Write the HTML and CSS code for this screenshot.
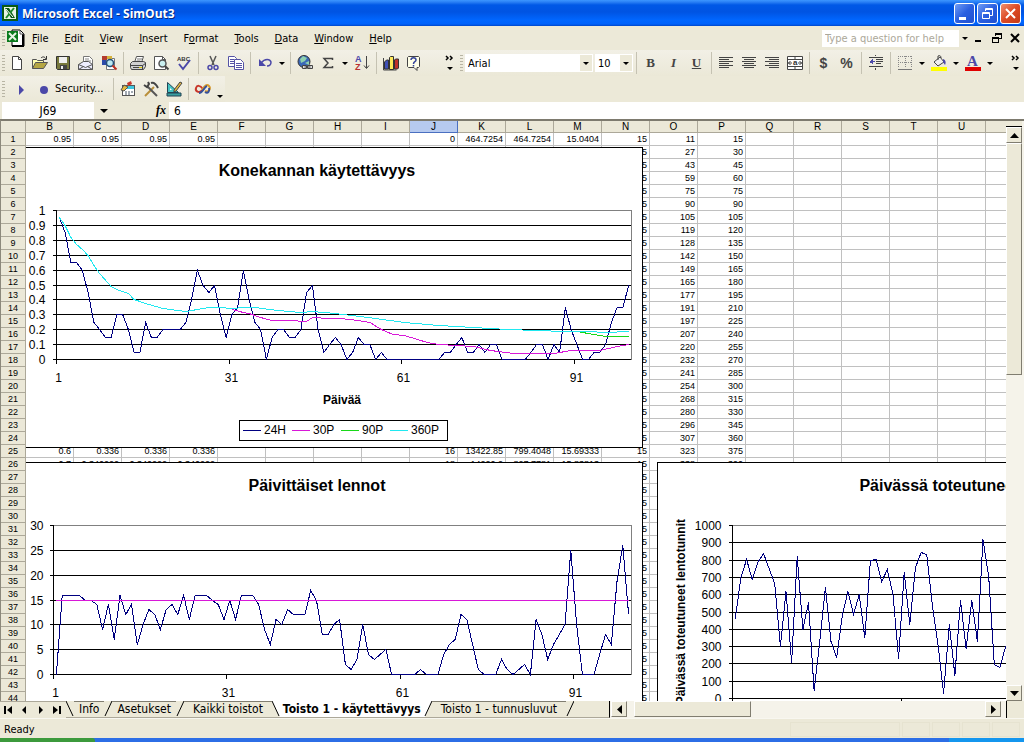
FILE: index.html
```html
<!DOCTYPE html>
<html lang="en">
<head>
    <meta charset="UTF-8">
    <title>Microsoft Excel - SimOut3</title>
    <link rel="stylesheet" href="styles.css">
</head>
<body>
    <header class="titlebar">
        <svg class="app-icon" width="16" height="16" viewBox="0 0 16 16">
            <rect width="16" height="16" fill="#0a5a14"/>
            <rect x="2" y="2" width="12" height="12" fill="#e8f4e4"/>
            <path d="M3 3h4l6 10H9z" fill="#0a5a14"/>
            <path d="M12 3L4 13" stroke="#1f8a2c" stroke-width="2"/>
            <path d="M4 4l7 8" stroke="#fff"/>
        </svg>
        <h1>Microsoft Excel - SimOut3</h1>
        <div class="window-buttons">
            <button class="win" aria-label="Minimize"><svg width="19" height="19"><path d="M4 13h7v3H4z" fill="#fff"/></svg></button>
            <button class="win" aria-label="Restore"><svg width="19" height="19" fill="none" stroke="#fff"><path d="M7.500 7V4.500h7v7H12M7 5.500h8"/><path d="M4.500 8.500h7v6h-7zM4 9.500h8"/></svg></button>
            <button class="win win-close" aria-label="Close"><svg width="19" height="19"><path d="M5 5l9 9M14 5l-9 9" stroke="#fff" stroke-width="2"/></svg></button>
        </div>
    </header>

    <nav class="menubar">
        <span class="grip"></span>
        <svg class="doc-icon" width="18" height="18" viewBox="0 0 18 18">
            <path d="M5 1h8l4 4v12H5z" fill="#fff" stroke="#000"/>
            <path d="M16 5v12H5" fill="none" stroke="#000" stroke-width="2"/>
            <path d="M13 1v4h4" fill="none" stroke="#555"/>
            <rect x="0" y="2" width="11" height="11" fill="#0a7a1c"/>
            <path d="M2 4l7 7M9 4l-7 7" stroke="#e8f4e4" stroke-width="2"/>
        </svg>
        <button><u>F</u>ile</button>
        <button><u>E</u>dit</button>
        <button><u>V</u>iew</button>
        <button><u>I</u>nsert</button>
        <button>F<u>o</u>rmat</button>
        <button><u>T</u>ools</button>
        <button><u>D</u>ata</button>
        <button><u>W</u>indow</button>
        <button><u>H</u>elp</button>
        <div class="help-box">
            <input type="text" placeholder="Type a question for help" aria-label="Type a question for help">
            <button class="arrow" aria-label="Previous questions"></button>
        </div>
        <div class="doc-buttons">
            <button aria-label="Minimize workbook"><svg width="10" height="10"><path d="M1 7h6v2H1z"/></svg></button>
            <button aria-label="Restore workbook"><svg width="10" height="10" fill="none" stroke="#000" shape-rendering="crispEdges"><path d="M3.500 3V.500h6v5H7M3 1.500h7M.500 4.500h6v5h-6zM0 5.500h7"/></svg></button>
            <button aria-label="Close workbook"><svg width="10" height="10"><path d="M1 1l8 8M9 1L1 9" stroke="#000" stroke-width="2"/></svg></button>
        </div>
    </nav>

    <div class="toolbars">
        <div class="toolbar standard">
            <span class="grip"></span>
            <button aria-label="New"><svg width="16" height="16"><path d="M3.500 1.500h6l3 3v10h-9z" fill="#fff" stroke="#444"/><path d="M9.500 1.500v3h3" fill="none" stroke="#444"/></svg></button>
            <button aria-label="Open"><svg width="16" height="16"><path d="M.500 13.500v-9h4l1 1h6v3" fill="#ffffb0" stroke="#555"/><path d="M.500 13.500l3-6h12l-4 6z" fill="#b5a642" stroke="#555"/><path d="M9 3c2-2 4-1 5 1M14.500 1v3.500H11" fill="none" stroke="#333"/></svg></button>
            <button aria-label="Save"><svg width="16" height="16"><path d="M1.500 1.500h13v13h-12l-1-1z" fill="#77783c" stroke="#333"/><rect x="4" y="2" width="8" height="6" fill="#eee"/><rect x="5" y="10" width="7" height="4" fill="#444"/><rect x="6" y="11" width="2" height="3" fill="#eee"/></svg></button>
            <button aria-label="E-mail"><svg width="16" height="16"><path d="M5.500 8V1.500h6l3 3V12" fill="#fff" stroke="#777"/><path d="M7 4h4M7 6h6" stroke="#888"/><path d="M.500 9.500l5-3h5l4 3v5H.500z" fill="#eef" stroke="#555"/><path d="M.500 9.500l7 3 7-3M.500 14.500l5-3M14.500 14.500l-5-3" fill="none" stroke="#555"/></svg></button>
            <button aria-label="Search"><svg width="16" height="16"><path d="M5.500 3.500h8v11h-8z" fill="#fff" stroke="#777"/><path d="M1 1h5v4H1z" fill="#b33b2f"/><path d="M6 1h5v3H6z" fill="#d7b23b"/><path d="M1 5h4v5H1z" fill="#2c4aa8"/><circle cx="9" cy="8" r="3.500" fill="#bdeaf2" stroke="#24507a" stroke-width="1.500"/><path d="M11.500 10.500l4 4" stroke="#c03020" stroke-width="2"/></svg></button>
            <span class="sep"></span>
            <button aria-label="Print"><svg width="16" height="16"><path d="M4.500 7.500l2-6h7l-2 6" fill="#fff" stroke="#555"/><path d="M7 4h5M6.500 6h4" stroke="#777"/><path d="M.500 8.500l2-2h11l2 1v4l-2 3h-12l-1-2z" fill="#cfcfcf" stroke="#444"/><path d="M.500 10.500h12l3-2M12.500 10.500v4M3 12.500h7" fill="none" stroke="#444"/><path d="M9 12h3v1H9z" fill="#d8c800"/></svg></button>
            <button aria-label="Print Preview"><svg width="16" height="16"><path d="M1.500 1.500h8l3 3v10h-11z" fill="#fff" stroke="#555"/><path d="M9.500 1.500v3h3" fill="none" stroke="#555"/><circle cx="9.500" cy="8.500" r="3.500" fill="#c9efef" stroke="#555" stroke-width="1.500"/><path d="M12 11l3.500 3.500" stroke="#444" stroke-width="2"/></svg></button>
            <button aria-label="Spelling"><svg width="16" height="16"><text x="1" y="6" class="abc">ABC</text><path d="M3 9l4 5 7-9" fill="none" stroke="#4b48a8" stroke-width="2"/></svg></button>
            <span class="sep"></span>
            <button aria-label="Cut"><svg width="16" height="16" fill="none"><path d="M5 1l4 9M11 1L7 10" stroke="#555" stroke-width="1.500"/><circle cx="5" cy="12.500" r="2" stroke="#4b48a8" stroke-width="1.500"/><circle cx="11" cy="12.500" r="2" stroke="#4b48a8" stroke-width="1.500"/></svg></button>
            <button aria-label="Copy"><svg width="16" height="16" fill="#fff" stroke="#5553a5"><path d="M.500 1.500h6l2 2v8h-8z"/><path d="M2 4.500h4M2 6.500h4M2 8.500h4"/><path d="M6.500 4.500h6l3 3v7h-9z"/><path d="M8 8.500h6M8 10.500h6M8 12.500h6"/></svg></button>
            <span class="sep"></span>
            <button aria-label="Undo"><svg width="16" height="16"><path d="M4 8c4-5 9-4 10-1 0 3-2 4-4 4" fill="none" stroke="#4b48a8" stroke-width="1.500"/><path d="M2 4v7h7z" fill="#4b48a8"/></svg></button>
            <button class="arrow" aria-label="Undo list"></button>
            <span class="sep"></span>
            <button aria-label="Hyperlink"><svg width="16" height="16"><circle cx="7" cy="6.500" r="6" fill="#3a68b8" stroke="#333"/><path d="M3 4l3-3 4 2-2 3-4 2zM8 8l4-2v4z" fill="#8ed0b0"/><path d="M5.500 10.500h4v3h-4zM10.500 10.500h5v3h-5zM7.500 12h6" fill="#ddd" stroke="#444"/></svg></button>
            <button aria-label="AutoSum"><svg width="16" height="16"><path d="M12.500 5V3.500H4L8 8l-4 4.500h8.500V11" fill="none" stroke="#444" stroke-width="1.500"/></svg></button>
            <button class="arrow" aria-label="AutoSum list"></button>
            <button aria-label="Sort Ascending"><svg width="16" height="16"><text x="1" y="7" class="sort-a">A</text><text x="1" y="15" class="sort-z">Z</text><path d="M12.500 1v12M10 10.500l2.500 3 2.500-3" fill="none" stroke="#444"/></svg></button>
            <span class="sep"></span>
            <button aria-label="Chart Wizard"><svg width="16" height="16"><path d="M.500 3v12h13" fill="none" stroke="#444"/><path d="M1.500 7l2-2h2v9h-4z" fill="#3f50b8" stroke="#333"/><path d="M6.500 2.500l1-1h3v13h-4z" fill="#ffe95a" stroke="#333"/><path d="M11.500 5l1-1h3v9l-1 1h-3z" fill="#c0302a" stroke="#333"/></svg></button>
            <button aria-label="Help"><svg width="16" height="16"><path d="M2.500 1.500h10l1 1v9l-1 1H11v3l-3-3H2.500l-1-1v-9z" fill="#ffffe8" stroke="#444"/><path d="M5 5c0-3 5-3 5 0 0 2-2.500 1.500-2.500 4M7.500 10v1.500" fill="none" stroke="#36459a" stroke-width="1.500"/></svg></button>
            <button class="overflow" aria-label="Toolbar options"><svg width="10" height="18"><path d="M1 2l2 2-2 2M5 2l2 2-2 2" fill="none" stroke="#000" stroke-width="1.500"/><path d="M2 13h6l-3 3z"/></svg></button>
        </div>
        <div class="toolbar formatting">
            <span class="grip"></span>
            <div class="combo combo-font">
                <select aria-label="Font"><option>Arial</option></select>
            </div>
            <div class="combo combo-size">
                <select aria-label="Font size"><option>10</option></select>
            </div>
            <span class="sep"></span>
            <button class="letter"><b>B</b></button>
            <button class="letter"><i>I</i></button>
            <button class="letter"><u>U</u></button>
            <span class="sep"></span>
            <button aria-label="Align Left"><svg width="16" height="16" stroke="#444" shape-rendering="crispEdges"><path d="M1 2.500h14M1 4.500h10M1 6.500h14M1 8.500h10M1 10.500h14M1 12.500h10"/></svg></button>
            <button aria-label="Center"><svg width="16" height="16" stroke="#444" shape-rendering="crispEdges"><path d="M1 2.500h14M3 4.500h10M1 6.500h14M3 8.500h10M1 10.500h14M3 12.500h10"/></svg></button>
            <button aria-label="Align Right"><svg width="16" height="16" stroke="#444" shape-rendering="crispEdges"><path d="M1 2.500h14M5 4.500h10M1 6.500h14M5 8.500h10M1 10.500h14M5 12.500h10"/></svg></button>
            <button aria-label="Merge and Center"><svg width="16" height="16"><path d="M.500 1.500h15v13H.500zM.500 4.500h15M.500 11.500h15M8 1v3M8 12v3" fill="#fff" stroke="#444"/><path d="M1 8h4M11 8h4M3.500 6L1.500 8l2 2M12.500 6l2 2-2 2" stroke="#444" fill="none"/><text x="6" y="10" class="merge-a">a</text></svg></button>
            <span class="sep"></span>
            <button class="letter money"><b>$</b></button>
            <button class="letter percent"><b>%</b></button>
            <span class="sep"></span>
            <button aria-label="Decrease Indent"><svg width="16" height="16" shape-rendering="crispEdges"><path d="M1 2.500h14M8 4.500h7M8 6.500h7M8 8.500h5M1 11.500h14M7.500 0v1M7.500 13v2" stroke="#444"/><path d="M5 4v5L1 7zM5 6h2v1H5z" fill="#4b48a8"/></svg></button>
            <span class="sep"></span>
            <button aria-label="Borders"><svg width="16" height="16" shape-rendering="crispEdges"><path d="M1 1.500h14M1 7.500h14M1.500 1v12M8.500 1v12M14.500 1v12" stroke="#888" stroke-dasharray="1 1"/><path d="M1 14.500h14" stroke="#777"/></svg></button>
            <button class="arrow" aria-label="Border list"></button>
            <button aria-label="Fill Color"><svg width="16" height="16"><path d="M3 7l6-5 4 5-6 4z" fill="#eee" stroke="#444"/><path d="M7 5V1c2-1 3 0 3 2" fill="none" stroke="#444"/><path d="M12 4c3 1 3 4 2 6l-2-3z" fill="#4b48a8"/><rect y="12" width="16" height="4" fill="#ff0"/></svg></button>
            <button class="arrow" aria-label="Fill color list"></button>
            <button aria-label="Font Color"><svg width="16" height="16"><text x="2" y="11" class="font-a">A</text><rect y="12" width="16" height="4" fill="#e00000"/></svg></button>
            <button class="arrow" aria-label="Font color list"></button>
            <button class="overflow" aria-label="Toolbar options"><svg width="10" height="18"><path d="M1 2l2 2-2 2M5 2l2 2-2 2" fill="none" stroke="#000" stroke-width="1.500"/><path d="M2 13h6l-3 3z"/></svg></button>
        </div>
    </div>

    <div class="toolbars">
        <div class="toolbar macros">
            <span class="grip"></span>
            <button aria-label="Run Macro"><svg width="16" height="16"><path d="M6 4l5 5-5 5z" fill="#4b48a8"/></svg></button>
            <button aria-label="Record Macro"><svg width="16" height="16"><circle cx="8" cy="9" r="4" fill="#4b48a8"/></svg></button>
            <button class="security">Security...</button>
            <span class="sep"></span>
            <button aria-label="Visual Basic Editor"><svg width="16" height="16"><rect x="2.500" y="4.500" width="12" height="10" fill="#fff" stroke="#555"/><rect x="3" y="5" width="11" height="3" fill="#3ec6e0"/><path d="M5 11h2M8 11h2M11 11h2M5 13h2M8 13h2" stroke="#456"/><path d="M1 9l3-5 4 2-4 4z" fill="#e5b83c" stroke="#555"/><path d="M7 2l4-2 1 3-4 2z" fill="#c8382c"/></svg></button>
            <button aria-label="Toolbox"><svg width="16" height="16" fill="none"><path d="M2 15L11 6" stroke="#b98f3a" stroke-width="2"/><path d="M4 5l10 10" stroke="#555" stroke-width="2"/><path d="M8 2c3-1 5 1 7 5M1 4l3 2 2-3-1-2" stroke="#444" stroke-width="2"/></svg></button>
            <button aria-label="Design Mode"><svg width="16" height="16"><path d="M1.500 1.500v10h11z" fill="#45c4c4" stroke="#245"/><path d="M4 7v2h2z" fill="#fff"/><path d="M1 12h14v3H1z" fill="#3a9ea0" stroke="#245"/><path d="M8 9l6-8 2 1-6 8-2 1z" fill="#e4b840" stroke="#444"/></svg></button>
            <span class="sep"></span>
            <button aria-label="Script Editor"><svg width="18" height="16" fill="none" stroke-width="2"><path d="M9 8C6 4 3 4 2 7s3 6 6 2" stroke="#c8382c"/><path d="M8 9c3-5 5-6 7-4s0 7-4 5" stroke="#d89a2a"/><path d="M5 12c4 0 5-6 8-7M11 11c3 2 5-1 4-4" stroke="#35509c"/></svg></button>
            <button class="arrow arrow-low" aria-label="Toolbar options"></button>
        </div>
    </div>

    <div class="formula-bar">
        <input class="name-box" type="text" value="J69" aria-label="Name box">
        <button class="arrow" aria-label="Name list"></button>
        <button class="fx">fx</button>
        <input class="formula" type="text" value="6" aria-label="Formula">
    </div>

    <main class="workbook">
        <div class="sheet">
            <table>
                <thead><tr id="columns"><th class="corner"></th></tr></thead>
                <tbody id="rows"></tbody>
            </table>
            <svg class="chart chart-availability" id="availability" width="617" height="301"></svg>
            <svg class="chart chart-flights" id="flights" width="617" height="301"></svg>
            <svg class="chart chart-hours" id="hours" width="660" height="301"></svg>
        </div>
        <div class="vscroll">
            <span class="split-y"></span>
            <button class="scroll-btn" aria-label="Scroll up"><svg width="9" height="5"><path d="M0 5h9L4.500 0z"/></svg></button>
            <span class="thumb-y"></span>
            <button class="scroll-btn" aria-label="Scroll down"><svg width="9" height="5"><path d="M0 0h9L4.500 5z"/></svg></button>
        </div>
    </main>

    <div class="sheet-bar">
        <div class="tab-nav">
            <button aria-label="First sheet"><svg width="9" height="8"><path d="M0 0h2v8H0zM8 0v8L3 4z"/></svg></button>
            <button aria-label="Previous sheet"><svg width="9" height="8"><path d="M6 0v8L2 4z"/></svg></button>
            <button aria-label="Next sheet"><svg width="9" height="8"><path d="M2 0v8l4-4z"/></svg></button>
            <button aria-label="Last sheet"><svg width="9" height="8"><path d="M0 0v8l5-4zM6 0h2v8H6z"/></svg></button>
        </div>
        <div class="tabs">
            <svg class="edge" width="8" height="16"><path d="M0 0l7 15" stroke="#000"/></svg>
            <button>Info</button>
            <svg class="edge" width="8" height="16"><path d="M8 0L1 15" stroke="#000"/></svg>
            <button>Asetukset</button>
            <svg class="edge" width="8" height="16"><path d="M8 0L1 15" stroke="#000"/></svg>
            <button class="tab-wide">Kaikki toistot</button>
            <svg class="edge" width="8" height="16"><path d="M0 0h8v16z" fill="#fff"/><path d="M0 0l7 15" stroke="#000"/></svg>
            <button class="active">Toisto 1 - käytettävyys</button>
            <svg class="edge" width="8" height="16"><path d="M0 0h8L1 16H0z" fill="#fff"/><path d="M8 0L1 15" stroke="#000"/></svg>
            <button class="tab-wide">Toisto 1 - tunnusluvut</button>
            <svg class="edge" width="8" height="16"><path d="M8 0L1 15" stroke="#000"/></svg>
        </div>
        <div class="hscroll">
            <button class="scroll-btn" aria-label="Scroll left"><svg width="5" height="9"><path d="M5 0v9L0 4.500z"/></svg></button>
            <span class="thumb-x"></span>
            <button class="scroll-btn scroll-right" aria-label="Scroll right"><svg width="5" height="9"><path d="M0 0v9l5-4.500z"/></svg></button>
        </div>
        <span class="size-corner"></span>
    </div>

    <footer class="status">
        <span class="ready">Ready</span>
        <span class="pane pane-wide"></span>
        <span class="pane"></span>
        <span class="pane"></span>
        <span class="pane"></span>
        <span class="pane"></span>
    </footer>
    <div class="taskbar"><span class="start"></span><span class="tray"></span></div>

    <script src="script.js"></script>
</body>
</html>
```
FILE: styles.css
```css
* {
    box-sizing: border-box;
}

body {
    margin: 0;
    height: 100vh;
    display: flex;
    flex-direction: column;
    overflow: hidden;
    background: #ece9d8;
    color: #000;
    font-family: Tahoma, "DejaVu Sans Condensed", "Noto Sans", sans-serif;
    font-size: 11px;
}

button {
    margin: 0;
    padding: 0;
    border: 0;
    background: none;
    color: inherit;
    font: inherit;
}

input,
select {
    min-width: 0;
    margin: 0;
    padding: 0;
    border: 0;
    border-radius: 0;
    background: #fff;
    color: #000;
    font: inherit;
}

/* title bar */
.titlebar {
    flex: none;
    height: 26px;
    display: flex;
    align-items: center;
    gap: 4px;
    padding: 0 3px 0 2px;
    background: linear-gradient(#3c96ff 0, #2a80f5 2px, #0058e6 5px, #0054e3 12px, #0066ff 20px, #0062fb 24px, #0046c8 26px);
}

.titlebar h1 {
    flex: 1;
    margin: 0;
    color: #fff;
    font: bold 12px "Open Sans", sans-serif;
    text-shadow: 1px 1px 0 #0a2a80;
}

.window-buttons {
    display: flex;
    gap: 2px;
}

.win {
    display: flex;
    width: 21px;
    height: 21px;
    border: 1px solid #fff;
    border-radius: 3px;
    background: linear-gradient(135deg, #6f9cf5, #2a5fe0 50%, #2050d0);
}

.win-close {
    background: linear-gradient(135deg, #f09070, #dc4a25 50%, #c43a18);
}

/* menus */
.menubar {
    flex: none;
    height: 24px;
    display: flex;
    align-items: center;
    padding: 0 4px 0 2px;
}

.menubar > button {
    padding: 0 8px;
    height: 19px;
}

.doc-icon {
    margin-left: 2px;
    margin-right: -1px;
}

.grip {
    flex: none;
    width: 3px;
    height: 16px;
    background: repeating-linear-gradient(#b8b5a4 0 1px, transparent 1px 3px);
}

.help-box {
    display: flex;
    width: 148px;
    height: 17px;
    margin-left: auto;
}

.help-box input {
    flex: 1;
    padding-left: 3px;
}

.help-box input::placeholder {
    color: #aca899;
    opacity: 1;
}

.doc-buttons {
    display: flex;
    gap: 8px;
    padding-left: 4px;
}

.doc-buttons svg {
    display: block;
}

.arrow {
    flex: none;
    width: 11px;
    height: 18px;
    display: flex;
    align-items: center;
    justify-content: center;
}

.arrow::after {
    content: "";
    border: 3px solid transparent;
    border-top-color: #000;
    border-bottom: 0;
}

.arrow-low {
    align-items: flex-end;
}

/* toolbars */
.toolbars {
    flex: none;
    display: flex;
    height: 26px;
}

.toolbar {
    display: flex;
    align-items: center;
    padding-left: 2px;
    background: linear-gradient(#f2f0e6, #ebe8d7);
}

.toolbar button:not(.arrow):not(.security):not(.overflow) {
    flex: none;
    width: 23px;
    height: 22px;
    display: flex;
    align-items: center;
    justify-content: center;
}

.toolbar svg {
    overflow: visible;
}

.standard {
    flex: none;
    width: 458px;
}

.formatting {
    flex: 1;
    padding-left: 2px;
}

.overflow {
    width: 13px;
    margin-left: auto;
}

.overflow svg {
    display: block;
}

.sep {
    flex: none;
    width: 6px;
    height: 22px;
    background: linear-gradient(90deg, transparent 3px, #c5c2b2 3px 4px, transparent 4px);
}

.combo {
    position: relative;
    display: flex;
    margin-left: 2px;
    height: 18px;
}

.combo::after {
    content: "";
    position: absolute;
    right: 4px;
    top: 8px;
    border: 3px solid transparent;
    border-top-color: #000;
    border-bottom: 0;
}

.combo select {
    width: 100%;
    padding-left: 2px;
    appearance: none;
    background: linear-gradient(90deg, #fff calc(100% - 12px), #ece9d8 calc(100% - 12px));
    border: 1px solid #fff;
}

.combo-font {
    width: 128px;
}

.combo-size {
    width: 38px;
}

.letter {
    color: #444;
}

.toolbar .letter {
    font: 13px "Liberation Serif", serif;
}

.toolbar .letter u,
.toolbar .letter i {
    font-weight: bold;
}

.toolbar .money,
.toolbar .percent {
    font: 14px "Liberation Sans", sans-serif;
}

.abc {
    font: bold 6px "Liberation Sans", sans-serif;
    fill: #333;
}

.sort-a,
.sort-z {
    font: bold 9px "Liberation Sans", sans-serif;
    fill: #4b48a8;
}

.sort-z {
    fill: #b83030;
}

.merge-a {
    font: bold 8px "Liberation Sans", sans-serif;
    fill: #333;
}

.font-a {
    font: bold 15px "Liberation Serif", serif;
    fill: #4b48a8;
}

.macros {
    width: 225px;
    padding-left: 2px;
    padding-bottom: 1px;
}

.macros .grip {
    margin-right: 4px;
}

.security {
    width: 52px;
    margin-right: 3px;
    text-align: left;
    white-space: nowrap;
}

/* formula bar */
.formula-bar {
    flex: none;
    display: flex;
    height: 17px;
    padding-left: 2px;
    font-size: 12px;
}

.name-box {
    width: 92px;
    text-align: center;
}

.formula-bar .arrow {
    width: 19px;
    height: 17px;
}

.formula-bar .arrow::after {
    border-width: 4px 4px 0;
}

.fx {
    width: 56px;
    padding-right: 3px;
    text-align: right;
    font: italic bold 12px "Liberation Serif", serif;
}

.formula {
    flex: 1;
    padding-left: 5px;
}

/* sheet */
.workbook {
    flex: 1;
    min-height: 0;
    display: flex;
    border-top: 2px solid #7d7a6e;
    border-left: 1px solid #8c897c;
}

.sheet {
    position: relative;
    flex: 1;
    min-width: 0;
    overflow: hidden;
    background: #fff;
}

table {
    width: 1033px;
    table-layout: fixed;
    border-collapse: separate;
    border-spacing: 0;
    font: 9px/12px "Liberation Sans", sans-serif;
}

th,
td {
    height: 13px;
    padding: 0 2px;
    border-right: 1px solid #c0c0c0;
    border-bottom: 1px solid #c0c0c0;
    text-align: right;
    white-space: nowrap;
}

th {
    background: #ebe8d8;
    border-color: #aca899;
    text-align: center;
    font-weight: normal;
}

thead th {
    height: 12px;
    line-height: 11px;
    font-size: 10px;
}

.corner {
    width: 25px;
}

.current {
    background: #b6caf0;
    border-color: #4a6fc0;
}

/* embedded charts float over the cells */
.chart {
    position: absolute;
    background: #fff;
    font: 12px "Liberation Sans", sans-serif;
}

.chart-availability {
    left: 25px;
    top: 26px;
}

.chart-flights {
    left: 25px;
    top: 341px;
}

.chart-hours {
    left: 656px;
    top: 341px;
}

.chart line,
.chart rect,
.chart polyline {
    fill: none;
    stroke: #000;
    shape-rendering: crispEdges;
}

.chart .plot-edge {
    stroke: #808080;
}

.chart .title {
    font-size: 16px;
    font-weight: bold;
}

.chart .axis-title {
    font-weight: bold;
}

.chart .navy {
    stroke: #000080;
}

.chart .magenta {
    stroke: #d818d8;
}

.chart .green {
    stroke: #18d818;
}

.chart .cyan {
    stroke: #20e8f0;
}

/* scroll bars */
.vscroll {
    flex: none;
    width: 18px;
    padding-right: 2px;
    display: flex;
    flex-direction: column;
    background: #f5f3ea;
}

.split-y {
    height: 6px;
    background: #ece9d8;
    border-bottom: 1px solid #000;
}

.scroll-btn {
    flex: none;
    width: 16px;
    height: 16px;
    display: flex;
    align-items: center;
    justify-content: center;
    background: #ece9d8;
    border: 1px solid;
    border-color: #fff #807d70 #807d70 #fff;
}

.thumb-y {
    flex: 0 0 40%;
    margin-bottom: auto;
    background: #ece9d8;
    border: 1px solid;
    border-color: #fff #807d70 #807d70 #fff;
}

.sheet-bar {
    flex: none;
    display: flex;
    height: 18px;
    padding-right: 2px;
    border-bottom: 1px solid #f8f7f0;
}

.tab-nav {
    display: flex;
    width: 66px;
    border-top: 1px solid #aca899;
}

.tab-nav button {
    flex: 1;
}

.tab-nav svg {
    display: inline-block;
}

.tabs {
    display: flex;
    width: 544px;
    height: 17px;
    border-right: 1px solid #000;
    border-bottom: 1px solid #aca899;
    font-size: 12px;
}

.tabs button {
    padding: 0 5px;
    border-top: 1px solid #807d70;
    line-height: 15px;
    white-space: nowrap;
}

.tabs .tab-wide {
    padding: 0 9px;
}

.tabs .active {
    padding: 0 3px;
    border-color: #fff;
    background: #fff;
    font-weight: bold;
}

.edge {
    flex: none;
}

.hscroll {
    flex: 1;
    display: flex;
    padding: 0 5px 0 1px;
    background: #f5f3ea;
}

.thumb-x {
    width: 117px;
    height: 16px;
    margin-left: 7px;
    background: #ece9d8;
    border: 1px solid;
    border-color: #fff #807d70 #807d70 #fff;
}

.scroll-right {
    margin-left: auto;
}

.size-corner {
    width: 16px;
    background: #ece9d8;
    border-left: 1px solid #000;
}

/* status bar */
.status {
    flex: none;
    display: flex;
    align-items: center;
    height: 19px;
    padding: 2px 4px 0;
    gap: 2px;
}

.ready {
    flex: 1;
}

.pane {
    width: 28px;
    height: 15px;
    border: 1px solid #e6e3d0;
}

.pane-wide {
    width: 110px;
}

.taskbar {
    flex: none;
    display: flex;
    justify-content: space-between;
    height: 4px;
    background: #2c6ee6;
}

.start {
    width: 95px;
    background: #3c9a3c;
    border-radius: 0 3px 0 0;
}

.tray {
    width: 75px;
    background: #1496ee;
}
```
FILE: script.js
```js
const SVG = 'http://www.w3.org/2000/svg';
// the last column only shows its left edge, so it has no letter
const columns = 'BCDEFGHIJKLMNOPQRSTU'.split('').concat('');

// Column O, from row 1
const flown = [11, 27, 43, 59, 75, 90, 105, 119, 128, 142, 149, 165, 177, 191, 197, 207, 220,
    232, 241, 254, 268, 280, 296, 307, 323, 338];

const cells = {
    1: { B: '0.95', C: '0.95', D: '0.95', E: '0.95', J: '0', K: '464.7254', L: '464.7254', M: '15.0404' },
    25: { B: '0.6', C: '0.336', D: '0.336', E: '0.336', J: '16', K: '13422.85', L: '799.4048', M: '15.69333' },
    26: { B: '0.7', C: '0.340222', D: '0.340222', E: '0.340222', J: '18', K: '14220.2', L: '827.7781', M: '15.83813' }
};

function buildSheet() {
    const head = document.getElementById('columns');
    columns.forEach(name => {
        const th = document.createElement('th');
        th.textContent = name;
        if (name === 'J') th.className = 'current';
        head.appendChild(th);
    });

    const body = document.getElementById('rows');
    for (let row = 1; row <= 44; row++) {
        const tr = document.createElement('tr');
        const th = document.createElement('th');
        th.textContent = row;
        tr.appendChild(th);
        columns.forEach(name => {
            const td = document.createElement('td');
            let value = cells[row] ? cells[row][name] : '';
            if (name === 'N') value = 15;
            if (name === 'O') value = flown[row - 1];
            if (name === 'P' && row <= 26) value = row * 15;
            td.textContent = value === undefined ? '' : value;
            tr.appendChild(td);
        });
        body.appendChild(tr);
    }
}

function add(svg, tag, attrs, text) {
    const el = document.createElementNS(SVG, tag);
    for (const key in attrs) el.setAttribute(key, attrs[key]);
    if (text !== undefined) el.textContent = text;
    svg.appendChild(el);
    return el;
}

function line(svg, x1, y1, x2, y2, cls) {
    add(svg, 'line', { x1, y1, x2, y2, class: cls || 'grid' });
}

function drawChart(id, c) {
    const svg = document.getElementById(id);
    const width = Number(svg.getAttribute('width'));
    const step = (c.right - c.left) / 100;
    // snapped to pixel centres, so that flat runs lie on the grid lines
    const yOf = v => Math.round(c.bottom - v / c.max * (c.bottom - c.top) - 0.5) + 0.5;

    // frame, left side only where the chart is not cut by the row headers
    line(svg, 0, 0.5, width, 0.5);
    line(svg, 0, 300.5, width, 300.5);
    line(svg, width - 0.5, 0, width - 0.5, 301);
    if (c.frameLeft) line(svg, 0.5, 0, 0.5, 301);

    for (let v = 0; v <= c.ticks; v++) {
        const value = c.max / c.ticks * v;
        const y = yOf(value);
        line(svg, c.left, y, c.right, y, v === c.ticks ? 'plot-edge' : 'grid');
        line(svg, c.left - 4, y, c.left, y);
        add(svg, 'text', { x: c.left - 11 + (c.labelShift || 0), y: y + 4, 'text-anchor': 'end' }, Number(value.toFixed(1)));
    }
    line(svg, c.right, c.top, c.right, c.bottom, 'plot-edge');
    line(svg, c.left, c.top, c.left, c.bottom);
    for (let day = 1; day < 100; day += 30) {
        const x = Math.floor(c.left + (day - 1) * step) + 0.5;
        line(svg, x, c.bottom, x, c.bottom + 4);
        add(svg, 'text', { x: x + 2, y: c.bottom + 22, 'text-anchor': 'middle' }, day);
    }

    c.series.forEach(s => {
        const points = s.points.map(p => (c.left + (p[0] - 0.5) * step).toFixed(1) + ',' + yOf(p[1]));
        add(svg, 'polyline', { points: points.join(' '), class: s.color });
    });
    add(svg, 'text', { x: c.titleX, y: 29, 'text-anchor': 'middle', class: 'title' }, c.title);
    return svg;
}

const daily = values => values.map((v, i) => [i + 1, v]);

const usable = daily([.95, .85, .65, .65, .6, .45, .25, .2, .15, .15, .3, .3, .2, .05, .05, .25, .15, .15, .2, .2,
    .2, .2, .25, .4, .6, .5, .45, .5, .3, .15, .3, .35, .6, .4, .25, .2, 0, .15, .2, .2,
    .15, .15, .2, .45, .5, .2, .05, .1, .15, .1, 0, .05, .15, .1, .1, 0, .05, 0, 0, 0,
    0, 0, 0, 0, 0, 0, 0, .05, .05, .1, .15, .05, .05, .1, .05, .1, .1, 0, 0, 0,
    0, 0, .05, .1, .1, 0, .1, .05, .35, .2, .1, 0, 0, .05, .05, .1, .25, .35, .35, .5]);

const mean30 = [[31, .335], [33, .315], [34, .31], [36, .285], [38, .26], [42, .262], [43, .255], [44, .258],
    [45, .283], [48, .275], [50, .275], [53, .263], [55, .247], [57, .2], [59, .17], [61, .163], [65, .112],
    [67, .1], [73, .085], [76, .058], [80, .04], [87, .038], [90, .058], [95, .062], [98, .085], [100, .103]];

const mean90 = [[91, .19], [94, .165], [96, .154], [99, .152], [100, .156]];

const mean360 = [[1, .95], [2, .9], [3, .82], [4, .775], [5, .74], [6, .695], [7, .63], [8, .58], [10, .49],
    [11, .47], [13, .44], [14, .405], [16, .373], [19, .34], [23, .32], [25, .335], [27, .348], [29, .348],
    [31, .34], [33, .35], [35, .348], [39, .328], [43, .315], [45, .322], [49, .308], [56, .277], [61, .248],
    [67, .225], [73, .214], [79, .203], [84, .194], [89, .19], [93, .19], [96, .18], [100, .19]];

const flights = daily([0, 16, 16, 16, 16, 15, 15, 14, 9, 14, 7, 16, 12, 14, 6, 10, 13, 12, 9, 13,
    14, 12, 16, 11, 16, 16, 16, 15, 14, 11, 15, 11, 16, 16, 16, 14, 9, 6, 11, 10,
    13, 12, 12, 12, 17, 15, 8, 8, 10, 11, 2, 1, 3, 10, 4, 3, 4, 5, 0, 0,
    0, 0, 0, 1, 0, 0, 0, 4, 6, 7, 12, 11, 6, 1, 0, 0, 0, 3, 1, 0,
    1, 2, 0, 11, 8, 3, 6, 8, 10, 25, 10, 0, 0, 0, 4, 8, 6, 19, 26, 12]);

const hours = daily([460, 700, 805, 690, 785, 838, 750, 665, 300, 620, 210, 820, 400, 555, 45, 330, 640, 330,
    235, 480, 620, 485, 600, 355, 800, 805, 675, 745, 600, 230, 730, 430, 755, 845, 830, 540, 310, 30, 430,
    135, 565, 290, 565, 330, 920, 705, 195, 180, 300]);

buildSheet();

const availabilityChart = drawChart('availability', {
    title: 'Konekannan käytettävyys', titleX: 291,
    left: 30.5, right: 605.5, top: 63.5, bottom: 212.5, max: 1, ticks: 10,
    series: [
        { color: 'navy', points: usable },
        { color: 'magenta', points: mean30 },
        { color: 'green', points: mean90 },
        { color: 'cyan', points: mean360 }
    ]
});
add(availabilityChart, 'text', { x: 316, y: 257, 'text-anchor': 'middle', class: 'axis-title' }, 'Päivää');
add(availabilityChart, 'rect', { x: 213.5, y: 273.5, width: 208, height: 20 });
[['24H', 'navy'], ['30P', 'magenta'], ['90P', 'green'], ['360P', 'cyan']].forEach(([name, color], i) => {
    const x = 217 + i * 49;
    line(availabilityChart, x, 283.5, x + 18, 283.5, color);
    add(availabilityChart, 'text', { x: x + 21, y: 287 }, name);
});

drawChart('flights', {
    title: 'Päivittäiset lennot', titleX: 291,
    left: 27.5, right: 605.5, top: 63.5, bottom: 212.5, max: 30, ticks: 6, labelShift: 1,
    series: [
        { color: 'navy', points: flights },
        { color: 'magenta', points: [[1, 15], [100, 15]] }
    ]
});

const hoursChart = drawChart('hours', {
    title: 'Päivässä toteutuneet lentotunnit', titleX: 326,
    left: 75.5, right: 638.5, top: 63.5, bottom: 236.5, max: 1000, ticks: 10, frameLeft: true,
    series: [{ color: 'navy', points: hours }]
});
add(hoursChart, 'text', { transform: 'translate(28 57) rotate(-90)', 'text-anchor': 'end', class: 'axis-title' },
    'Päivässä toteutuneet lentotunnit');
```
